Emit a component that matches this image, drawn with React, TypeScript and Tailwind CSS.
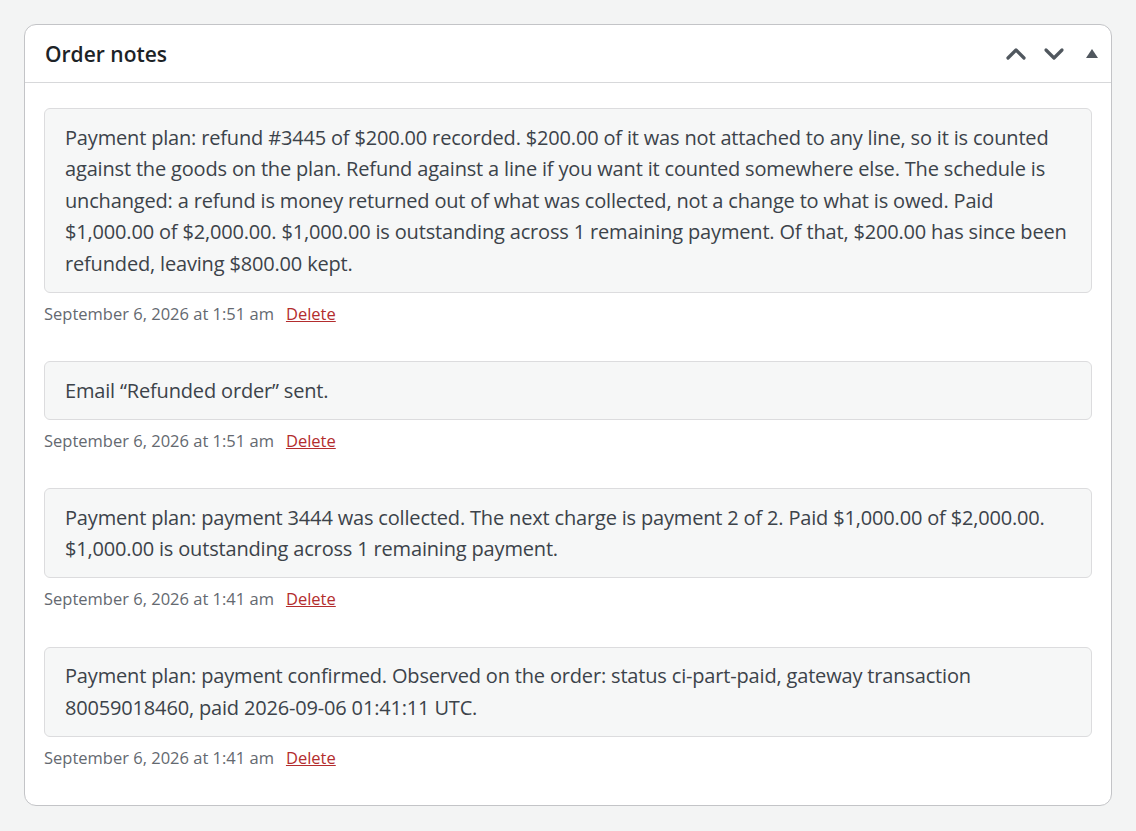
import { ChevronUp, ChevronDown } from 'lucide-react'

interface Note {
  id: number
  text: string
  date: string
}

const notes: Note[] = [
  {
    id: 1,
    text: 'Payment plan: refund #3445 of $200.00 recorded. $200.00 of it was not attached to any line, so it is counted against the goods on the plan. Refund against a line if you want it counted somewhere else. The schedule is unchanged: a refund is money returned out of what was collected, not a change to what is owed. Paid $1,000.00 of $2,000.00. $1,000.00 is outstanding across 1 remaining payment. Of that, $200.00 has since been refunded, leaving $800.00 kept.',
    date: 'September 6, 2026 at 1:51 am',
  },
  {
    id: 2,
    text: 'Email \u201cRefunded order\u201d sent.',
    date: 'September 6, 2026 at 1:51 am',
  },
  {
    id: 3,
    text: 'Payment plan: payment 3444 was collected. The next charge is payment 2 of 2. Paid $1,000.00 of $2,000.00. $1,000.00 is outstanding across 1 remaining payment.',
    date: 'September 6, 2026 at 1:41 am',
  },
  {
    id: 4,
    text: 'Payment plan: payment confirmed. Observed on the order: status ci-part-paid, gateway transaction 80059018460, paid 2026-09-06 01:41:11 UTC.',
    date: 'September 6, 2026 at 1:41 am',
  },
]

export default function App() {
  return (
    <div className="min-h-[831px] bg-[#f3f4f4] p-6 font-['Open_Sans',sans-serif]">
      <div className="bg-white border border-[#c3c4c7] rounded-xl w-[1088px]">
        <div className="flex items-center justify-between h-[58px] border-b border-[#d7d8da] pl-5">
          <h2 className="text-[21px] font-semibold text-[#1d2327] pt-[2px]">Order notes</h2>
          <div className="flex items-center text-[#50575e]">
            <button className="w-[38px] h-[38px] flex items-center justify-center">
              <ChevronUp className="w-8 h-8" strokeWidth={2.4} />
            </button>
            <button className="w-[38px] h-[38px] flex items-center justify-center">
              <ChevronDown className="w-8 h-8" strokeWidth={2.4} />
            </button>
            <button className="w-[38px] h-[38px] flex items-center justify-center">
              <svg width="14" height="12" viewBox="0 0 14 12" fill="currentColor">
                <path d="M7 1l6 9H1z" />
              </svg>
            </button>
          </div>
        </div>

        <ul className="pt-[25px] px-[19px]">
          {notes.map((note) => (
            <li key={note.id} className="mb-[35.5px]">
              <div className="bg-[#f6f7f7] border border-[#dcdcde] rounded-md px-5 py-[12.5px] text-[20px] leading-[31.5px] tracking-[-0.17px] text-[#3c434a]">
                {note.text}
              </div>
              <p className="mt-[9px] text-[16.5px] leading-6 text-[#646970]">
                {note.date}
                <a href="#" className="ml-3 text-[#b32d2e] underline">
                  Delete
                </a>
              </p>
            </li>
          ))}
        </ul>
      </div>
    </div>
  )
}
